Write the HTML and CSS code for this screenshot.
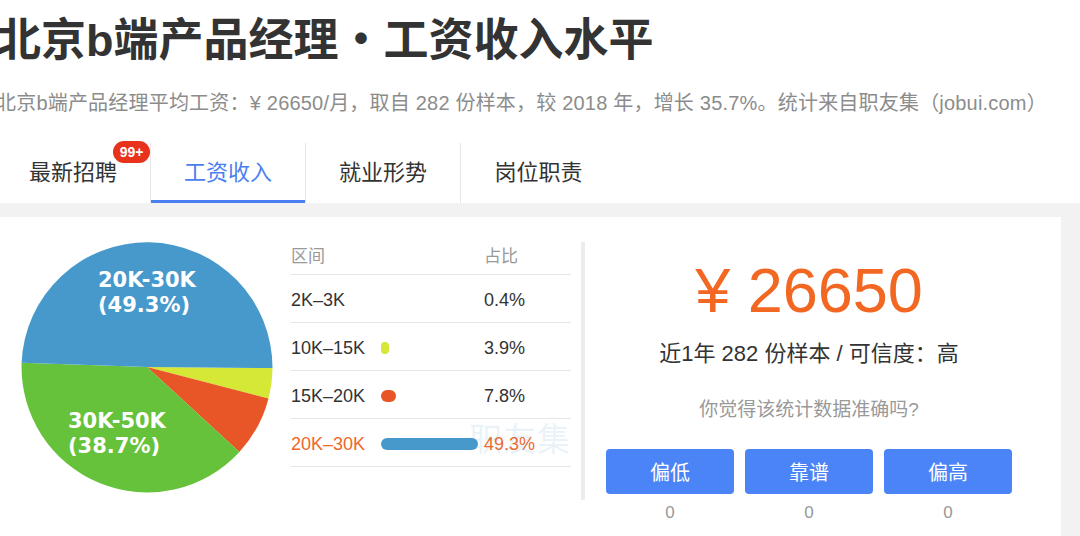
FILE: index.html
```html
<!DOCTYPE html>
<html lang="zh-CN">
<head>
    <meta charset="UTF-8">
    <meta name="viewport" content="width=device-width, initial-scale=1.0">
    <title>北京b端产品经理·工资收入水平</title>
    <link rel="stylesheet" href="styles.css">
</head>
<body>

<div class="header">
    <h1 class="title">北京b端产品经理・工资收入水平</h1>
    <p class="summary">北京b端产品经理平均工资：¥ 26650/月，取自 282 份样本，较 2018 年，增长 35.7%。统计来自职友集（jobui.com）</p>

    <div class="tabs">
        <div class="tab">最新招聘<span class="badge">99+</span></div>
        <div class="tab active">工资收入</div>
        <div class="tab">就业形势</div>
        <div class="tab">岗位职责</div>
    </div>
</div>

<div class="main">
    <div class="card">
        <div class="pie-box">
            <svg class="pie" width="260" height="260" viewBox="0 0 260 260">
                <path d="M130 130 L255.5 131.1 A125.5 125.5 0 0 1 251.5 161.4 Z" fill="#d4e835"/>
                <path d="M130 130 L251.5 161.4 A125.5 125.5 0 0 1 222.4 214.9 Z" fill="#e85526"/>
                <path d="M130 130 L222.4 214.9 A125.5 125.5 0 0 1 4.6 125.8 Z" fill="#65c23a"/>
                <path d="M130 130 L4.6 125.8 A125.5 125.5 0 0 1 255.5 131.1 Z" fill="#4799cc"/>
                <text class="pie-label" x="81" y="50">20K-30K</text>
                <text class="pie-label" x="81" y="75">(49.3%)</text>
                <text class="pie-label" x="51" y="191">30K-50K</text>
                <text class="pie-label" x="51" y="216">(38.7%)</text>
            </svg>
        </div>

        <div class="range-table">
            <div class="row head">
                <span class="col-range">区间</span>
                <span class="col-bar"></span>
                <span class="col-pct">占比</span>
            </div>
            <div class="row">
                <span class="col-range">2K–3K</span>
                <span class="col-bar"></span>
                <span class="col-pct">0.4%</span>
            </div>
            <div class="row">
                <span class="col-range">10K–15K</span>
                <span class="col-bar"><i class="bar yellow" style="width: 8px"></i></span>
                <span class="col-pct">3.9%</span>
            </div>
            <div class="row">
                <span class="col-range">15K–20K</span>
                <span class="col-bar"><i class="bar red" style="width: 15px"></i></span>
                <span class="col-pct">7.8%</span>
            </div>
            <div class="row current">
                <span class="col-range">20K–30K</span>
                <span class="col-bar"><i class="bar blue" style="width: 97px"></i></span>
                <span class="col-pct">49.3%</span>
            </div>
            <span class="watermark">职友集</span>
        </div>

        <div class="divider"></div>

        <div class="salary">
            <div class="amount">¥ 26650</div>
            <div class="samples">近1年 282 份样本 / 可信度：高</div>
            <div class="question">你觉得该统计数据准确吗?</div>
            <div class="votes">
                <div class="vote">
                    <button>偏低</button>
                    <span class="count">0</span>
                </div>
                <div class="vote">
                    <button>靠谱</button>
                    <span class="count">0</span>
                </div>
                <div class="vote">
                    <button>偏高</button>
                    <span class="count">0</span>
                </div>
            </div>
        </div>
    </div>
</div>

</body>
</html>
```

FILE: styles.css
```css
body {
    font-family: "Liberation Sans", "Noto Sans CJK SC", sans-serif;
    background-color: #fff;
    color: #333;
    margin: 0;
    padding: 0;
    overflow: hidden;
}

.header {
    margin-left: -4px;
}

.title {
    font-size: 45px;
    line-height: 60px;
    font-weight: bold;
    color: #333;
    margin: 11px 0 0 0;
    white-space: nowrap;
}

.summary {
    font-size: 20px;
    line-height: 28px;
    letter-spacing: 0.2px;
    color: #8c8c8c;
    margin: 18px 0 0 0;
    white-space: nowrap;
}

.tabs {
    display: flex;
    margin-top: 26px;
    height: 60px;
}

.tab {
    position: relative;
    width: 155px;
    box-sizing: border-box;
    border-right: 1px solid #e6e6e6;
    font-size: 22px;
    line-height: 60px;
    text-align: center;
    color: #333;
}

.tab:last-child {
    border-right: none;
}

.tab.active {
    color: #4b7ef0;
}

.tab.active::after {
    content: "";
    position: absolute;
    left: 0;
    right: 0;
    bottom: 0;
    height: 3px;
    background-color: #4b7ef0;
}

.badge {
    position: absolute;
    left: 117px;
    top: -2px;
    width: 37px;
    height: 22px;
    border-radius: 11px;
    background-color: #e8321c;
    color: #fff;
    font-size: 14px;
    font-weight: bold;
    line-height: 22px;
    text-align: center;
}

.main {
    background-color: #f2f2f2;
    padding-top: 14px;
    height: 319px;
}

.card {
    display: flex;
    align-items: flex-start;
    width: 1061px;
    height: 319px;
    padding-top: 18px;
    box-sizing: border-box;
    background-color: #fff;
}

.pie-box {
    width: 291px;
    flex-shrink: 0;
}

.pie {
    display: block;
    margin: 2px 0 0 17px;
}

.pie-label {
    font-family: "DejaVu Sans", sans-serif;
    font-weight: bold;
    font-size: 21px;
    fill: #fff;
}

.range-table {
    position: relative;
    width: 280px;
    flex-shrink: 0;
}

.row {
    display: flex;
    align-items: center;
    height: 44px;
    padding-top: 3px;
    border-bottom: 1px solid #e6e6e6;
    font-size: 18px;
    color: #333;
}

.row.head {
    height: 39px;
    padding-top: 0;
    font-size: 17px;
    color: #999;
}

.row.current {
    color: #f0672a;
}

.col-range {
    width: 90px;
}

.col-bar {
    width: 103px;
    display: flex;
    align-items: center;
}

.bar {
    display: block;
    height: 12px;
    border-radius: 6px;
}

.bar.yellow {
    background-color: #d4e835;
}

.bar.red {
    background-color: #e85526;
}

.bar.blue {
    background-color: #4799cc;
}

.watermark {
    position: absolute;
    left: 178px;
    top: 178px;
    font-size: 33px;
    color: rgba(71, 153, 204, 0.12);
    letter-spacing: 1px;
}

.divider {
    width: 4px;
    height: 258px;
    margin: 7px 0 0 10px;
    background-color: #ececec;
    flex-shrink: 0;
}

.salary {
    width: 406px;
    margin-left: 21px;
    text-align: center;
}

.amount {
    margin-top: 19px;
    font-size: 63px;
    line-height: 72px;
    color: #f26822;
}

.samples {
    margin-top: 13px;
    font-size: 22px;
    line-height: 30px;
    color: #333;
}

.question {
    margin-top: 28px;
    font-size: 19px;
    line-height: 26px;
    color: #999;
}

.votes {
    display: flex;
    gap: 11px;
    margin-top: 26px;
}

.vote {
    width: 128px;
}

.vote button {
    display: block;
    width: 100%;
    height: 45px;
    border: none;
    border-radius: 4px;
    background-color: #4b84f6;
    color: #fff;
    font-family: inherit;
    font-size: 20px;
    cursor: pointer;
}

.count {
    display: block;
    margin-top: 8px;
    font-size: 17px;
    line-height: 22px;
    color: #999;
}
```
